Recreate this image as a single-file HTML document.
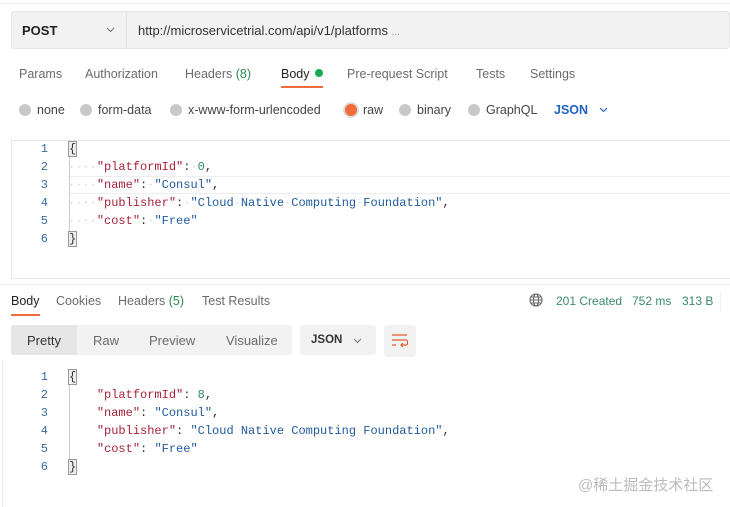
<!DOCTYPE html>
<html><head><meta charset="utf-8"><style>
*{margin:0;padding:0;box-sizing:border-box}
body{width:730px;height:507px;background:#fff;font-family:"Liberation Sans",sans-serif;font-size:12.5px;color:#6b6b6b;position:relative;overflow:hidden}
.a{position:absolute;white-space:nowrap}
.mono{font-family:"Liberation Mono",monospace;font-size:12px}
.ln{color:#3a6e9e;width:20px;text-align:right}
.k{color:#a8233a}.s{color:#1f5a9b}.n{color:#2a8a6a}.p{color:#333}.d{color:#d6d6d6}
.rad{width:12px;height:12px;border-radius:50%;background:#c8c8c8;display:inline-block;vertical-align:-2px;margin-right:6px}
.br{border:1px solid #999;background:#eee;color:#333}
</style></head><body>
<div class="a" style="left:0;top:3px;width:730px;height:1px;background:#eee"></div>
<div class="a" style="left:11px;top:11px;width:719px;height:38px;background:#f2f2f2;border:1px solid #e6e6e6;border-radius:3px"></div>
<div class="a" style="left:126px;top:11px;width:1px;height:38px;background:#e0e0e0"></div>
<div class="a" style="left:22px;top:23px;font-weight:bold;color:#222;font-size:13px">POST</div>
<svg class="a" style="left:106px;top:27px" width="9" height="6" viewBox="0 0 9 6" fill="none" stroke="#777" stroke-width="1.1"><path d="M1 1l3.5 3.5L8 1"/></svg>
<div class="a" style="left:138px;top:23px;color:#333;font-size:13px">http://microservicetrial.com/api/v1/platforms <span style="color:#999;font-size:10px">...</span></div>

<div class="a" style="left:19px;top:67px">Params</div>
<div class="a" style="left:85px;top:67px">Authorization</div>
<div class="a" style="left:185px;top:67px">Headers <span style="color:#2a8a4a">(8)</span></div>
<div class="a" style="left:281px;top:67px;color:#222">Body <span style="display:inline-block;width:8px;height:8px;border-radius:50%;background:#1aaa55;vertical-align:1px;margin-left:2px"></span></div>
<div class="a" style="left:281px;top:86px;width:42px;height:2px;background:#f26b3a"></div>
<div class="a" style="left:347px;top:67px">Pre-request Script</div>
<div class="a" style="left:476px;top:67px">Tests</div>
<div class="a" style="left:530px;top:67px">Settings</div>

<div class="a" style="left:19px;top:103px;color:#444"><span class="rad"></span>none</div>
<div class="a" style="left:80px;top:103px;color:#444"><span class="rad"></span>form-data</div>
<div class="a" style="left:170px;top:103px;color:#444"><span class="rad"></span>x-www-form-urlencoded</div>
<div class="a" style="left:345px;top:103px;color:#444"><span class="rad" style="background:#f26b3a;box-shadow:0 0 0 2px #ddd"></span>raw</div>
<div class="a" style="left:399px;top:103px;color:#444"><span class="rad"></span>binary</div>
<div class="a" style="left:468px;top:103px;color:#444"><span class="rad"></span>GraphQL</div>
<div class="a" style="left:554px;top:103px;color:#1f62c4;font-weight:bold">JSON</div>
<svg class="a" style="left:599px;top:107px" width="9" height="6" viewBox="0 0 9 6" fill="none" stroke="#1f62c4" stroke-width="1.1"><path d="M1 1l3.5 3.5L8 1"/></svg>

<div class="a" style="left:11px;top:140px;width:719px;height:139px;border:1px solid #e6e6e6;border-right:none"></div>
<div class="a" style="left:68px;top:176px;width:662px;height:18px;border-top:1px solid #eee;border-bottom:1px solid #eee"></div>
<div class="a" style="left:69px;top:148px;width:1px;height:90px;background:#ccc"></div>
<div class="a mono" style="left:28px;top:140px;line-height:18px">
<div class="ln">1</div><div class="ln">2</div><div class="ln">3</div><div class="ln">4</div><div class="ln">5</div><div class="ln">6</div></div>
<div class="a mono" style="left:68px;top:140px;line-height:18px;white-space:pre"><span class="br">{</span>
<span class="d">····</span><span class="k">"platformId"</span><span class="p">:</span><span class="d">·</span><span class="n">0</span><span class="p">,</span>
<span class="d">····</span><span class="k">"name"</span><span class="p">:</span><span class="d">·</span><span class="s">"Consul"</span><span class="p">,</span>
<span class="d">····</span><span class="k">"publisher"</span><span class="p">:</span><span class="d">·</span><span class="s">"Cloud<span class="d">·</span>Native<span class="d">·</span>Computing<span class="d">·</span>Foundation"</span><span class="p">,</span>
<span class="d">····</span><span class="k">"cost"</span><span class="p">:</span><span class="d">·</span><span class="s">"Free"</span>
<span class="br">}</span></div>

<div class="a" style="left:0;top:284px;width:730px;height:1px;background:#eee"></div>
<div class="a" style="left:11px;top:294px;color:#222">Body</div>
<div class="a" style="left:11px;top:314px;width:29px;height:2px;background:#f26b3a"></div>
<div class="a" style="left:56px;top:294px">Cookies</div>
<div class="a" style="left:118px;top:294px">Headers <span style="color:#2a8a4a">(5)</span></div>
<div class="a" style="left:202px;top:294px">Test Results</div>
<svg class="a" style="left:529px;top:293px" width="14" height="14" viewBox="0 0 14 14" fill="none" stroke="#666" stroke-width="1.1"><circle cx="7" cy="7" r="6"/><ellipse cx="7" cy="7" rx="2.6" ry="6"/><path d="M1 7h12M2 4h10M2 10h10"/></svg>
<div class="a" style="left:556px;top:294px;color:#3a8a6a;font-size:12px">201 Created</div>
<div class="a" style="left:632px;top:294px;color:#3a8a6a;font-size:12px">752 ms</div>
<div class="a" style="left:682px;top:294px;color:#3a8a6a;font-size:12px">313 B</div>
<div class="a" style="left:720px;top:292px;width:1px;height:20px;background:#eee"></div>

<div class="a" style="left:11px;top:325px;width:281px;height:30px;background:#f2f2f2;border-radius:3px"></div>
<div class="a" style="left:11px;top:325px;width:66px;height:30px;background:#e6e6e6;border-radius:3px 0 0 3px"></div>
<div class="a" style="left:27px;top:333px;color:#333;font-size:13px">Pretty</div>
<div class="a" style="left:93px;top:333px;font-size:13px">Raw</div>
<div class="a" style="left:149px;top:333px;font-size:13px">Preview</div>
<div class="a" style="left:226px;top:333px;font-size:13px">Visualize</div>
<div class="a" style="left:300px;top:325px;width:76px;height:30px;background:#f2f2f2;border-radius:3px"></div>
<div class="a" style="left:311px;top:334px;color:#333;font-weight:bold;font-size:11.5px">JSON</div>
<svg class="a" style="left:353px;top:338px" width="9" height="6" viewBox="0 0 9 6" fill="none" stroke="#777" stroke-width="1.1"><path d="M1 1l3.5 3.5L8 1"/></svg>
<div class="a" style="left:384px;top:325px;width:32px;height:32px;background:#f2f2f2;border-radius:3px"></div>
<svg class="a" style="left:391px;top:333px" width="18" height="16" viewBox="0 0 18 16" fill="none" stroke="#e0602a" stroke-width="1.2"><path d="M1 2h15M1 7h14c2 0 2 5 0 5H10M12 10l-2 2 2 2M1 12h4"/></svg>

<div class="a" style="left:69px;top:376px;width:1px;height:90px;background:#ccc"></div>
<div class="a mono" style="left:28px;top:368px;line-height:18px">
<div class="ln">1</div><div class="ln">2</div><div class="ln">3</div><div class="ln">4</div><div class="ln">5</div><div class="ln">6</div></div>
<div class="a mono" style="left:68px;top:368px;line-height:18px;white-space:pre"><span class="br">{</span>
    <span class="k">"platformId"</span><span class="p">:</span> <span class="n">8</span><span class="p">,</span>
    <span class="k">"name"</span><span class="p">:</span> <span class="s">"Consul"</span><span class="p">,</span>
    <span class="k">"publisher"</span><span class="p">:</span> <span class="s">"Cloud Native Computing Foundation"</span><span class="p">,</span>
    <span class="k">"cost"</span><span class="p">:</span> <span class="s">"Free"</span>
<span class="br">}</span></div>
<div class="a" style="left:2px;top:360px;width:1px;height:147px;background:#eee"></div>
<div class="a" style="left:578px;top:474px;color:#bbb;font-size:15px;font-family:'Liberation Sans','Noto Sans CJK SC',sans-serif">@稀土掘金技术社区</div>
</body></html>
